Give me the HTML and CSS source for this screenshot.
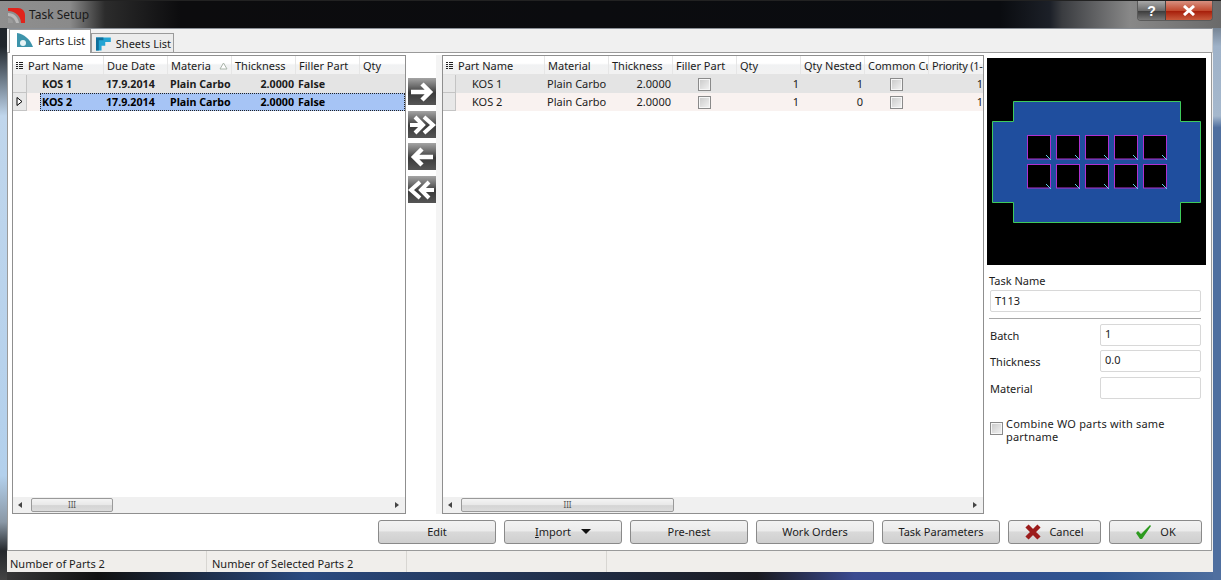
FILE: index.html
```html
<!DOCTYPE html>
<html lang="en">
  <head>
    <meta charset="UTF-8" />
    <title>Task Setup</title>
    <link rel="stylesheet" href="styles.css">
  </head>
  <body>
    <div class="window">
      <div class="titlebar">
        <svg class="app-icon" width="17" height="15" viewBox="0 0 17 15">
          <path d="M0 0h10c4 0 7 3 7 7v8h-4C13 9 8 3 0 3z" fill="#e0241c" />
          <path d="M0 5c6 0 10 4 11 10H8C7 11 4 8 0 8z" fill="#b9b9b9" />
          <path d="M0 10c3 0 5 2 5 5H0z" fill="#9a9a9a" />
        </svg>
        <span class="title">Task Setup</span>
        <div class="caption-btns">
          <div class="caption-btn help">?</div>
          <div class="caption-btn close">
            <svg width="14" height="11" viewBox="0 0 14 11"><path d="M2 1l10 9M12 1L2 10" stroke="#fff" stroke-width="3" /></svg>
          </div>
        </div>
      </div>

      <div class="client">
        <div class="tabs">
          <div class="tab active">
            <svg width="17" height="15" viewBox="0 0 17 15">
              <path d="M1 0c7 1 13 6 16 14H1z" fill="#3d94ab" />
              <circle cx="7" cy="10" r="3" fill="#e8f4f6" />
            </svg>
            <span>Parts List</span>
          </div>
          <div class="tab">
            <svg width="16" height="15" viewBox="0 0 16 15">
              <path d="M0 1h16v5h-6v4H6v5H0z" fill="#23a4d3" />
              <path d="M0 1h8v3H3v11H0z" fill="#0f6f9b" />
            </svg>
            <span>Sheets List</span>
          </div>
        </div>

        <div class="panel">
          <div class="main-row">
            <div class="grid grid-left">
              <div class="grid-head cols-left">
                <div class="col-chooser"><i></i><i></i><i></i><i></i></div>
                <div class="hcell span-2">Part Name</div>
                <div class="hcell">Due Date</div>
                <div class="hcell sorted">Materia
                  <svg width="9" height="8" viewBox="0 0 9 8"><path d="M4.5 1L8 7H1z" fill="#fff" stroke="#a9b4a9" /></svg>
                </div>
                <div class="hcell">Thickness</div>
                <div class="hcell">Filler Part</div>
                <div class="hcell last">Qty</div>
              </div>
              <div class="grid-body bold">
                <div class="grow cols-left odd">
                  <div class="indicator"></div><div></div>
                  <div class="cell">KOS 1</div>
                  <div class="cell">17.9.2014</div>
                  <div class="cell">Plain Carbo</div>
                  <div class="cell num">2.0000</div>
                  <div class="cell">False</div>
                  <div class="cell"></div>
                </div>
                <div class="grow cols-left even">
                  <div class="indicator"><svg width="7" height="9" viewBox="0 0 7 9"><path d="M1 .5L6 4.5L1 8.5z" fill="#fff" stroke="#000" /></svg></div><div></div>
                  <div class="sel-row">
                    <div class="cell">KOS 2</div>
                    <div class="cell">17.9.2014</div>
                    <div class="cell">Plain Carbo</div>
                    <div class="cell num">2.0000</div>
                    <div class="cell">False</div>
                    <div class="cell"></div>
                  </div>
                </div>
              </div>
              <div class="hscroll">
                <span class="arrow-l"></span>
                <div class="track"><div class="thumb thumb-left">III</div></div>
                <span class="arrow-r"></span>
              </div>
            </div>

            <div class="move-btns">
              <div class="move-btn">
                <svg width="28" height="28" viewBox="0 0 28 28"><path d="M3 14h18M14 6l8 8-8 8" fill="none" stroke="#fff" stroke-width="4.5" /></svg>
              </div>
              <div class="move-btn">
                <svg width="28" height="28" viewBox="0 0 28 28"><path d="M2 14h12M7 6l8 8-8 8" fill="none" stroke="#fff" stroke-width="4" /><path d="M16 6l9 8-9 8" fill="none" stroke="#fff" stroke-width="4" /></svg>
              </div>
              <div class="move-btn">
                <svg width="28" height="28" viewBox="0 0 28 28"><path d="M25 14H7M14 6l-8 8 8 8" fill="none" stroke="#fff" stroke-width="4.5" /></svg>
              </div>
              <div class="move-btn">
                <svg width="28" height="28" viewBox="0 0 28 28"><path d="M26 14H14M21 6l-8 8 8 8" fill="none" stroke="#fff" stroke-width="4" /><path d="M12 6l-9 8 9 8" fill="none" stroke="#fff" stroke-width="4" /></svg>
              </div>
            </div>

            <div class="grid grid-right">
              <div class="grid-head cols-right">
                <div class="col-chooser"><i></i><i></i><i></i><i></i></div>
                <div class="hcell span-2">Part Name</div>
                <div class="hcell">Material</div>
                <div class="hcell">Thickness</div>
                <div class="hcell">Filler Part</div>
                <div class="hcell">Qty</div>
                <div class="hcell">Qty Nested</div>
                <div class="hcell">Common Cu</div>
                <div class="hcell last tight">Priority (1-</div>
              </div>
              <div class="grid-body">
                <div class="grow cols-right odd">
                  <div class="indicator"></div><div></div>
                  <div class="cell">KOS 1</div>
                  <div class="cell">Plain Carbo</div>
                  <div class="cell num">2.0000</div>
                  <div class="cell center"><span class="check"></span></div>
                  <div class="cell num">1</div>
                  <div class="cell num">1</div>
                  <div class="cell center"><span class="check"></span></div>
                  <div class="cell num flush">1</div>
                </div>
                <div class="grow cols-right even">
                  <div class="indicator"></div><div></div>
                  <div class="cell">KOS 2</div>
                  <div class="cell">Plain Carbo</div>
                  <div class="cell num">2.0000</div>
                  <div class="cell center"><span class="check"></span></div>
                  <div class="cell num">1</div>
                  <div class="cell num">0</div>
                  <div class="cell center"><span class="check"></span></div>
                  <div class="cell num flush">1</div>
                </div>
              </div>
              <div class="hscroll">
                <span class="arrow-l"></span>
                <div class="track"><div class="thumb thumb-right">III</div></div>
                <span class="arrow-r"></span>
              </div>
            </div>

            <div class="side">
              <svg class="preview" width="219" height="207" viewBox="0 0 219 207">
                <defs>
                  <g id="hole">
                    <rect x="0.5" y="0.5" width="23" height="23.5" fill="#000" stroke="#b030d0" />
                    <path d="M19 20l5 5" stroke="#5fd0e8" />
                  </g>
                </defs>
                <rect width="219" height="207" fill="#000" />
                <path d="M26.5 43.5H193.5V63.5H213.5V144.5H193.5V164.5H26.5V144.5H5.5V63.5H26.5Z" fill="#1f4e9e" stroke="#3ecb5c" />
                <use href="#hole" x="40" y="77" />
                <use href="#hole" x="69" y="77" />
                <use href="#hole" x="98" y="77" />
                <use href="#hole" x="127" y="77" />
                <use href="#hole" x="156" y="77" />
                <use href="#hole" x="40" y="106" />
                <use href="#hole" x="69" y="106" />
                <use href="#hole" x="98" y="106" />
                <use href="#hole" x="127" y="106" />
                <use href="#hole" x="156" y="106" />
              </svg>
              <div class="form">
                <label class="task-label">Task Name</label>
                <div class="input wide">T113</div>
                <div class="rule"></div>
                <div class="field"><label>Batch</label><div class="input">1</div></div>
                <div class="field"><label>Thickness</label><div class="input">0.0</div></div>
                <div class="field mat"><label>Material</label><div class="input"></div></div>
                <div class="combine">
                  <span class="check big"></span>
                  <span>Combine WO parts with same partname</span>
                </div>
              </div>
            </div>
          </div>

          <div class="button-row">
            <div class="btn">Edit</div>
            <div class="btn"><span><u>I</u>mport</span><b class="drop-arrow"></b></div>
            <div class="btn">Pre-nest</div>
            <div class="btn">Work Orders</div>
            <div class="btn">Task Parameters</div>
            <div class="btn small">
              <svg width="16" height="16" viewBox="0 0 16 16"><path d="M2 2l12 12M14 2L2 14" stroke="#9c1c1c" stroke-width="4.5" /></svg>
              <span>Cancel</span>
            </div>
            <div class="btn small">
              <svg width="17" height="16" viewBox="0 0 17 16"><path d="M1 9l2-2 3 3 9-9 1 1-9 13h-2z" fill="#2c9a1e" /></svg>
              <span>OK</span>
            </div>
          </div>
        </div>

        <div class="statusbar">
          <div class="status-cell first">Number of Parts 2</div>
          <div class="status-cell">Number of Selected Parts 2</div>
          <div class="status-cell"></div>
          <div class="status-cell end"></div>
        </div>
      </div>
    </div>
  </body>
</html>
```

FILE: styles.css
```css
* {
  box-sizing: border-box;
}

body {
  margin: 0;
  font-family: "Noto Sans", "DejaVu Sans", sans-serif;
  font-size: 11px;
  color: #1c1c1c;
  overflow: hidden;
}

.window {
  width: 1221px;
  height: 580px;
  display: flex;
  flex-direction: column;
  background:
    linear-gradient(to bottom, #1c2026 0, #20262c 8%, #c0d6ec 20%, #b3d0ec 82%, #8a98a6 90%, #25282c 95%, #444 100%) left / 7px 100% no-repeat,
    linear-gradient(to bottom, #3a4046 0, #9fb2c8 8%, #a5b8cd 20%, #4f6f9f 22%, #4f6f9f 100%) right / 8px 100% no-repeat,
    linear-gradient(to right, #3a3a3a 0, #111 8%, #2a4a80 25%, #1a1a20 62%, #3a4a90 70%, #2f5590 90%, #4f6f9f 100%);
}

.titlebar {
  height: 28px;
  display: flex;
  align-items: flex-start;
  padding: 7px 8px 0 8px;
  background: linear-gradient(to right, #8f8f8f 0, #8a8a8a 70px, #2c2c2c 105px, #0c0c0e 180px, #0a0c10 1000px, #1c2028 1050px, #3a3c40 1062px, #888 1130px, #6a6a6a 1221px);
  border-top: 1px solid #222;
}

.app-icon {
  flex: none;
}

.title {
  margin-left: 4px;
  font-size: 12px;
  line-height: 14px;
  color: #1a1a1a;
  flex: 1;
}

.caption-btns {
  display: flex;
  margin-top: -7px;
  height: 20px;
  border: 1px solid #5a5a5a;
  border-top: none;
  border-radius: 0 0 4px 4px;
  overflow: hidden;
}

.caption-btn {
  display: flex;
  align-items: center;
  justify-content: center;
  height: 100%;
}

.help {
  width: 28px;
  font-family: "Liberation Sans", sans-serif;
  font-weight: bold;
  font-size: 14px;
  color: #fff;
  background: linear-gradient(to bottom, #a8a8a8, #6c6c6c 50%, #3f3f3f 55%, #777);
  border-right: 1px solid #444;
}

.close {
  width: 46px;
  background: linear-gradient(to bottom, #d89080, #c24a30 50%, #a8200c 55%, #c85a3c);
}

.client {
  flex: 1;
  display: flex;
  flex-direction: column;
  margin: 0 8px 8px 7px;
  background: #f0f0f0;
  min-height: 0;
}

.tabs {
  height: 25px;
  display: flex;
  align-items: flex-end;
  padding-left: 2px;
  background: #f0f0f0;
  border-top: 1px solid #8a8f96;
  border-right: 1px solid #ccc;
  margin-bottom: -1px;
}

.tab {
  height: 20px;
  display: flex;
  align-items: center;
  gap: 5px;
  padding: 0 2px 0 4px;
  width: 83px;
  border: 1px solid #9a9a9a;
  border-bottom: none;
  background: #ececec;
  white-space: nowrap;
}

.tab.active {
  height: 24px;
  width: 82px;
  background: #fff;
  padding-left: 6px;
  padding-bottom: 3px;
  position: relative;
  z-index: 1;
}

.panel {
  flex: 1;
  min-height: 0;
  display: flex;
  flex-direction: column;
  background: #fff;
  border: 1px solid #9a9a9a;
  padding: 2px 1px 0 4px;
  margin-right: 1px;
}

.main-row {
  display: flex;
  height: 459px;
}

.grid {
  height: 459px;
  display: flex;
  flex-direction: column;
  border: 1px solid #8f8f8f;
  background: #fff;
  flex: none;
}

.grid-left {
  width: 394px;
}

.grid-right {
  width: 542px;
}

.cols-left {
  display: grid;
  grid-template-columns: 14px 13px 64px 64px 64px 64px 64px 1fr;
}

.cols-right {
  display: grid;
  grid-template-columns: 13px 14px 75px 64px 64px 64px 64px 64px 64px 1fr;
}

.grid-head {
  height: 19px;
  background: linear-gradient(to bottom, #fff 0, #fff 40%, #f1f2f3 50%, #f2f2f2 100%);
  border-bottom: 1px solid #e4e4e4;
  flex: none;
}

.col-chooser {
  display: flex;
  flex-direction: column;
  gap: 1px;
  padding: 6px 0 0 3px;
}

.col-chooser i {
  width: 7px;
  height: 1px;
  background: linear-gradient(to right, #222 2px, transparent 2px, transparent 3px, #222 3px);
}

.hcell {
  padding: 1px 0 0 3px;
  border-right: 1px solid #e6e6e6;
  white-space: nowrap;
  overflow: hidden;
  display: flex;
  align-items: center;
  gap: 8px;
  height: 18px;
}

.hcell.last {
  border-right: none;
}

.hcell.tight {
  letter-spacing: -.25px;
}

.span-2 {
  grid-column: span 2;
  padding-left: 1px;
}

.cols-right .span-2 {
  padding-left: 2px;
}

.grid-body {
  flex: 1;
  min-height: 0;
}

.bold {
  font-weight: bold;
  font-size: 10.7px;
}

.grow {
  height: 18px;
  line-height: 18px;
}

.odd {
  background: #e4e4e4;
}

.even {
  background: #f9f2f0;
}

.indicator {
  background: #e8e8e8;
  border-right: 1px solid #c4c4c4;
  border-bottom: 1px solid #c4c4c4;
  display: flex;
  align-items: center;
  justify-content: center;
}

.sel-row {
  grid-column: 3 / -1;
  display: grid;
  grid-template-columns: 64px 64px 64px 64px 64px 1fr;
  background: #a6c4f5;
  outline: 1px dotted #222;
  outline-offset: -1px;
  color: #000;
}

.cell {
  padding-left: 2px;
  white-space: nowrap;
  overflow: hidden;
  height: 18px;
}

.num {
  text-align: right;
  padding-right: 2px;
}

.flush {
  padding-right: 0;
}

.center {
  display: flex;
  align-items: center;
  justify-content: center;
  padding: 0 2px 0 0;
}

.check {
  display: block;
  width: 13px;
  height: 13px;
  border: 1px solid #8a8a8a;
  background: linear-gradient(135deg, #c8c8c8, #f4f4f4);
  box-shadow: inset 0 0 0 1px #f6f6f6;
}

.check.big {
  flex: none;
  margin-top: 5px;
}

.hscroll {
  height: 16px;
  flex: none;
  display: flex;
  align-items: center;
  background: #f0f0f0;
  padding: 0 6px 0 5px;
}

.arrow-l {
  width: 0;
  height: 0;
  border-top: 3px solid transparent;
  border-bottom: 3px solid transparent;
  border-right: 4px solid #444;
}

.arrow-r {
  width: 0;
  height: 0;
  border-top: 3px solid transparent;
  border-bottom: 3px solid transparent;
  border-left: 4px solid #444;
}

.track {
  flex: 1;
  height: 100%;
  padding: 1px 0 1px 9px;
}

.thumb {
  height: 14px;
  border: 1px solid #9a9a9a;
  border-radius: 2px;
  background: linear-gradient(to bottom, #f4f4f4, #e8e8e8 50%, #d4d4d4 55%, #dcdcdc);
  text-align: center;
  font-size: 8px;
  line-height: 11px;
  color: #555;
}

.thumb-left {
  width: 82px;
}

.thumb-right {
  width: 213px;
}

.move-btns {
  width: 36px;
  flex: none;
  display: flex;
  flex-direction: column;
  gap: 5.5px;
  padding: 23px 6px 0 2px;
  background: linear-gradient(to right, #fff 0, #fff 30px, #f4f4f4 30px, #f4f4f4 36px);
}

.move-btn {
  width: 28px;
  height: 27px;
  background: linear-gradient(to bottom, #a4a4a4 0, #6e6e6e 30%, #3a3a3a 55%, #555 100%);
}

.move-btn svg {
  display: block;
}

.side {
  width: 225px;
  flex: none;
  padding: 3px 0 0 3px;
  display: flex;
  flex-direction: column;
}

.preview {
  display: block;
  flex: none;
}

.form {
  padding: 8px 0 0 2px;
  width: 214px;
}

.task-label {
  display: block;
  line-height: 15px;
  margin-bottom: 2px;
}

.input {
  height: 22px;
  border: 1px solid #d8d8d8;
  border-radius: 2px;
  padding: 0 4px;
  line-height: 17px;
  background: #fff;
}

.input.wide {
  margin-left: 1px;
  width: 211px;
  line-height: 20px;
}

.rule {
  height: 1px;
  background: #a8a8a8;
  margin: 6px 0 5px 0;
  width: 212px;
}

.field {
  display: flex;
  align-items: center;
  justify-content: space-between;
  width: 212px;
  height: 22px;
  margin-bottom: 4px;
  padding-left: 1px;
}

.field label {
  margin-top: 1px;
}

.field .input {
  width: 101px;
}

.field.mat {
  margin-top: 5px;
}

.combine {
  display: flex;
  gap: 3px;
  padding: 14px 0 0 1px;
  line-height: 13px;
  letter-spacing: .2px;
}

.button-row {
  display: flex;
  justify-content: flex-end;
  gap: 8px;
  padding: 6px 8px 0 0;
}

.btn {
  width: 118px;
  height: 24px;
  display: flex;
  align-items: center;
  justify-content: center;
  gap: 6px;
  padding-bottom: 1px;
  border: 1px solid #8a8a8a;
  border-radius: 3px;
  background: linear-gradient(to bottom, #f2f2f2 0, #ebebeb 45%, #d9d9d9 50%, #cfcfcf 100%);
}

.btn.small {
  width: 93px;
  gap: 8px;
}

.drop-arrow {
  margin-left: 4px;
  width: 0;
  height: 0;
  border-left: 5px solid transparent;
  border-right: 5px solid transparent;
  border-top: 5px solid #111;
}

.statusbar {
  height: 21px;
  flex: none;
  display: flex;
  background: #f0eeeb;
  line-height: 25px;
}

.status-cell {
  width: 200px;
  padding-left: 5px;
  border-right: 1px solid #d8d6d2;
  white-space: nowrap;
}

.status-cell.first {
  padding-left: 3px;
}

.status-cell.end {
  flex: 1;
  border-right: none;
}
```
